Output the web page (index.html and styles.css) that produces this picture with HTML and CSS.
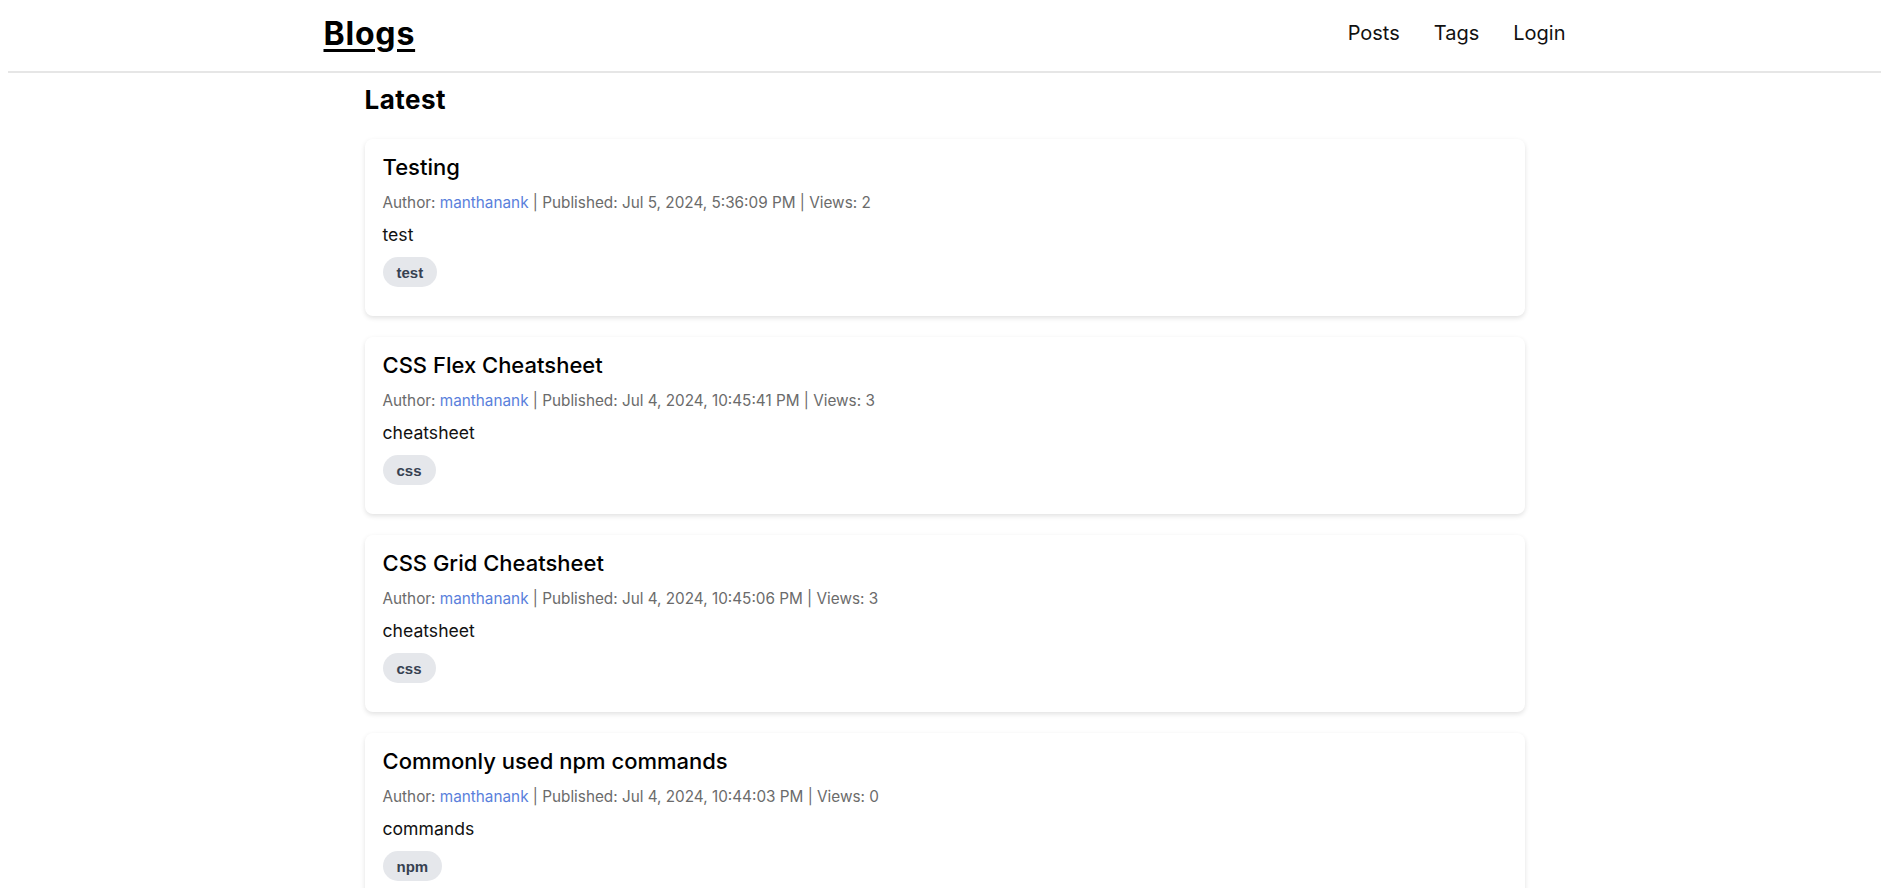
FILE: index.html
```html
<!DOCTYPE html>
<html lang="en">
<head>
<meta charset="utf-8">
<title>Blogs</title>
<link rel="stylesheet" href="styles.css">
</head>
<body>
<header class="site-header">
  <div class="header-inner">
    <a class="brand" href="#">Blogs</a>
    <nav class="nav">
      <a href="#">Posts</a>
      <a href="#">Tags</a>
      <a href="#">Login</a>
    </nav>
  </div>
</header>
<main class="main">
  <h2 class="section-title">Latest</h2>
  <div class="posts">
    <article class="card">
      <h3 class="card-title">Testing</h3>
      <p class="meta">Author: <a href="#">manthanank</a> | Published: Jul 5, 2024, 5:36:09 PM | Views: 2</p>
      <p class="desc">test</p>
      <div class="tags"><span class="tag">test</span></div>
    </article>
    <article class="card">
      <h3 class="card-title">CSS Flex Cheatsheet</h3>
      <p class="meta">Author: <a href="#">manthanank</a> | Published: Jul 4, 2024, 10:45:41 PM | Views: 3</p>
      <p class="desc">cheatsheet</p>
      <div class="tags"><span class="tag">css</span></div>
    </article>
    <article class="card">
      <h3 class="card-title">CSS Grid Cheatsheet</h3>
      <p class="meta">Author: <a href="#">manthanank</a> | Published: Jul 4, 2024, 10:45:06 PM | Views: 3</p>
      <p class="desc">cheatsheet</p>
      <div class="tags"><span class="tag">css</span></div>
    </article>
    <article class="card">
      <h3 class="card-title">Commonly used npm commands</h3>
      <p class="meta">Author: <a href="#">manthanank</a> | Published: Jul 4, 2024, 10:44:03 PM | Views: 0</p>
      <p class="desc">commands</p>
      <div class="tags"><span class="tag">npm</span></div>
    </article>
  </div>
</main>
</body>
</html>
```
FILE: styles.css
```css
body {
  margin: 8px;
  font-family: Inter, "Noto Sans", sans-serif;
  color: #111;
  background: #fff;
}

.site-header {
  height: 65px;
  box-sizing: border-box;
  border-bottom: 2px solid #e6e6e6;
}

.header-inner {
  max-width: 1242px;
  margin: 0 auto;
  height: 50px;
  display: flex;
  align-items: center;
  justify-content: space-between;
}

.brand {
  font-size: 32px;
  font-weight: 700;
  color: #000;
  text-decoration: underline;
  text-underline-offset: 4px;
  text-decoration-thickness: 3px;
  letter-spacing: 0.8px;
}

.nav {
  display: flex;
  gap: 34px;
}

.nav a {
  font-size: 20px;
  color: #111;
  text-decoration: none;
}

.main {
  max-width: 1160px;
  margin: 0 auto;
}

.section-title {
  margin: 0;
  padding-top: 11px;
  height: 66px;
  box-sizing: border-box;
  font-size: 26px;
  font-weight: 700;
  line-height: 32px;
  letter-spacing: 0.5px;
  color: #000;
}

.posts {
  display: flex;
  flex-direction: column;
  gap: 21px;
}

.card {
  background: #fff;
  border-radius: 8px;
  box-shadow: 0 2px 5px rgba(0, 0, 0, 0.12);
  padding: 14px 18px 27px;
  height: 177px;
  box-sizing: border-box;
}

.card-title {
  margin: 0;
  font-size: 22px;
  font-weight: 550;
  line-height: 29px;
  color: #000;
}

.meta {
  margin: 10px 0 0;
  font-size: 15.3px;
  line-height: 22px;
  color: #6b6b6b;
}

.meta a {
  color: #5a7fdc;
  text-decoration: none;
}

.desc {
  margin: 9px 0 0;
  font-size: 17.6px;
  line-height: 24px;
  color: #111;
}

.tags {
  margin-top: 10px;
  display: flex;
  gap: 8px;
}

.tag {
  display: inline-flex;
  align-items: center;
  height: 30px;
  padding: 0 14px;
  border-radius: 15px;
  background: #e5e7eb;
  color: #374151;
  font-family: "Liberation Sans", Arial, sans-serif;
  font-weight: 700;
  font-size: 15px;
}
```
